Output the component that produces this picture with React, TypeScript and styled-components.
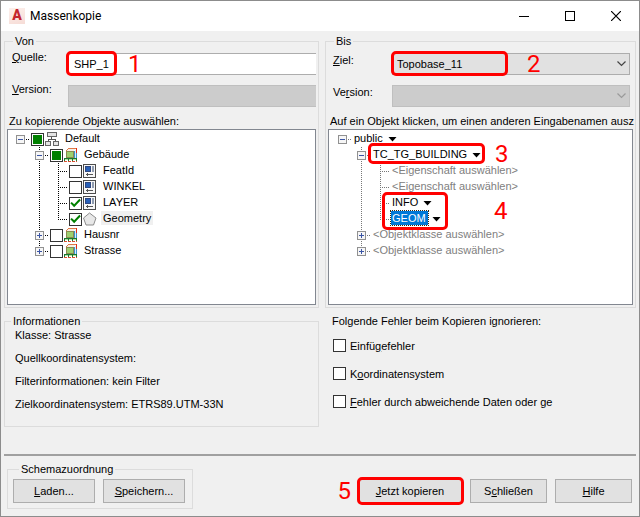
import React, { useEffect, useRef } from "react";
import styled, { createGlobalStyle, css } from "styled-components";

const GlobalStyle = createGlobalStyle`
  *, *::before, *::after { box-sizing: border-box; }
  body {
    margin: 0;
    font-family: "Liberation Sans", Arial, sans-serif;
    font-size: 11px;
    line-height: 14px;
    color: #000;
    background: #f0f0f0;
  }
  button, input, select { font: inherit; color: inherit; margin: 0; }
`;

/* ---------- window ---------- */

const Window = styled.div`
  display: flex;
  flex-direction: column;
  min-height: 100vh;
  background: #f0f0f0;
  border: 1px solid #8c8c8c;
`;

const TitleBar = styled.header`
  display: flex;
  align-items: center;
  height: 30px;
  padding-left: 8px;
  background: #fff;
`;

const AppLogo = styled.span`
  width: 16px;
  height: 16px;
  margin-right: 5px;
  background: linear-gradient(160deg, #fdf0ec, #f6dcd6);
  color: #c4262e;
  font: 900 14px/14px "Roboto", sans-serif;
  text-align: center;
`;

const Title = styled.h1`
  flex: 1;
  margin: 0;
  font: 12px/16px "Roboto", sans-serif;
`;

const WindowButton = styled.button`
  display: flex;
  align-items: center;
  justify-content: center;
  width: 46px;
  height: 30px;
  padding: 0;
  border: 0;
  background: transparent;
`;

const Content = styled.main`
  display: grid;
  grid-template-columns: minmax(0, 315fr) minmax(0, 311fr);
  column-gap: 6px;
  row-gap: 6px;
  padding: 3px 3px 0;
`;

/* ---------- groups and fields ---------- */

const Group = styled.fieldset`
  min-width: 0;
  margin: 0;
  padding: 0;
  border: 1px solid #dcdcdc;
`;

const Legend = styled.legend`
  margin-left: 6px;
  padding: 0 2px;
`;

const CopyGroup = styled(Group)<{ $top: number }>`
  padding: ${(p) => p.$top}px 2px 2px;
`;

const Fields = styled.div<{ $gap: number; $right: number }>`
  display: flex;
  flex-direction: column;
  gap: ${(p) => p.$gap}px;
  padding: 0 ${(p) => p.$right}px 0 5px;
`;

const Field = styled.div<{ $label: number; $drop: number }>`
  display: grid;
  grid-template-columns: ${(p) => p.$label}px minmax(0, 1fr);
  align-items: start;
  > div { margin-top: ${(p) => p.$drop}px; }
`;

const ControlWrap = styled.div`
  position: relative;
  display: flex;
`;

const control = css`
  width: 100%;
  height: 22px;
  border: 1px solid #adadad;
  border-radius: 0;
  &:disabled { background: #ccc; border-color: #bfbfbf; opacity: 1; }
`;

const TextBox = styled.input`
  ${control}
  padding: 0 5px;
  border-right-width: 0;
  background: #fff;
`;

const Combo = styled.select`
  ${control}
  appearance: none;
  padding: 0 20px 0 4px;
  background: #e1e1e1;
`;

const ComboArrow = styled.svg`
  position: absolute;
  right: 4px;
  top: 8px;
  pointer-events: none;
`;

const TreeCaption = styled.div`
  margin: 7px 0 1px;
  padding-left: 2px;
  white-space: nowrap;
`;

/* ---------- trees ---------- */

const TreeBox = styled.div<{ $left: number }>`
  min-height: 176px;
  padding: 1px 0 0 ${(p) => p.$left}px;
  border: 1px solid #828790;
  background: #fff;
`;

const TreeRow = styled.div`
  display: flex;
  height: 16px;
`;

const Guide = styled.svg`
  flex: none;
  display: block;
`;

const NodeLabel = styled.label`
  display: flex;
  align-items: center;
  height: 16px;
  padding-left: 1px;
`;

const NodeIcon = styled.svg`
  flex: none;
  margin: 0 4px 0 1px;
`;

const NodeText = styled.span<{ $active?: boolean }>`
  align-self: flex-start;
  padding: 0 2px;
  background: ${(p) => (p.$active ? "#f0f0f0" : "transparent")};
`;

const CheckBox = styled.input`
  appearance: none;
  flex: none;
  display: grid;
  place-items: center;
  width: 13px;
  height: 13px;
  border: 1px solid #333;
  background: #fff;
  &:checked::before {
    content: "";
    width: 11px;
    height: 11px;
    background: #008000;
    clip-path: polygon(3% 52%, 16% 40%, 38% 62%, 85% 12%, 98% 26%, 38% 88%);
  }
  &:indeterminate::before {
    content: "";
    width: 9px;
    height: 9px;
    background: #008000;
  }
`;

const TargetButton = styled.button<{ $empty?: boolean; $selected?: boolean }>`
  position: relative;
  display: flex;
  align-items: center;
  gap: 4px;
  height: 16px;
  padding: 0 0 0 1px;
  border: 0;
  background: transparent;
  color: ${(p) => (p.$empty ? "#808080" : p.$selected ? "#fff" : "#000")};
`;

const TargetText = styled.span<{ $selected?: boolean }>`
  align-self: flex-start;
  padding: 0 1px;
  white-space: nowrap;
  ${(p) =>
    p.$selected &&
    css`
      padding-right: 2px;
      background: #0078d7;
      outline: 1px dotted #3a2a10;
    `}
`;

/* ---------- annotations ---------- */

const Callout = styled.span<{ $top: number; $left: number; $width: number; $height: number }>`
  position: absolute;
  z-index: 1;
  top: ${(p) => p.$top}px;
  left: ${(p) => p.$left}px;
  width: ${(p) => p.$width}px;
  height: ${(p) => p.$height}px;
  border: 3px solid #f00;
  border-radius: 5px;
  pointer-events: none;
`;

const CalloutNumber = styled.span<{ $gap: number; $before?: boolean }>`
  position: absolute;
  top: 0;
  bottom: 0;
  ${(p) => (p.$before ? "right" : "left")}: calc(100% + ${(p) => p.$gap}px);
  display: flex;
  align-items: center;
  color: #f00;
  font: 24px/16px "Roboto", sans-serif;
`;

/* ---------- lower part ---------- */

const InfoList = styled.div`
  display: flex;
  flex-direction: column;
  gap: 9px;
  padding: 0 10px 15px;
`;

const IgnorePanel = styled.div`
  display: flex;
  flex-direction: column;
  align-items: flex-start;
  gap: 15px;
  padding-left: 7px;
`;

const IgnoreTitle = styled.div`
  margin-bottom: -4px;
`;

const IgnoreOption = styled.label`
  display: flex;
  align-items: center;
  gap: 4px;
  height: 13px;
  padding-left: 1px;
`;

const Separator = styled.hr`
  width: auto;
  height: 2px;
  margin: 27px 3px 6px;
  border: 0;
  background: #a0a0a0;
`;

const Footer = styled.footer`
  display: flex;
  justify-content: space-between;
  align-items: flex-end;
  padding: 0 7px 7px 6px;
`;

const SchemaGroup = styled(Group)`
  padding: 3px 7px 5px 5px;
`;

const ButtonRow = styled.div`
  display: flex;
  gap: 8px;
`;

const ActionRow = styled(ButtonRow)`
  padding-bottom: 6px;
`;

const PushButton = styled.button<{ $width: number }>`
  position: relative;
  width: ${(p) => p.$width}px;
  height: 24px;
  padding: 0;
  border: 1px solid #adadad;
  background: #e1e1e1;
  white-space: nowrap;
`;

/* ---------- drawings ---------- */

type GuideKind = "none" | "line" | "tee" | "corner" | "root" | "open" | "closed" | "closedLast";

function GuideCell({ kind, tone }: { kind: GuideKind; tone: string }) {
  const expander = kind === "root" || kind === "open" || kind === "closed" || kind === "closedLast";
  const up = kind !== "none" && kind !== "root";
  const down = up && kind !== "corner" && kind !== "closedLast";
  const right = kind !== "none" && kind !== "line";
  return (
    <Guide width="19" height="16" viewBox="0 0 19 16" shapeRendering="crispEdges" aria-hidden="true">
      <g stroke={tone} strokeDasharray="1 1">
        {up && <path d="M9.5 0V9" />}
        {down && <path d="M9.5 8V16" />}
        {right && <path d="M9 8.5H19" />}
      </g>
      {expander && (
        <>
          <rect x="5.5" y="4.5" width="8" height="8" fill="#f6f6f6" stroke="#919191" />
          <path d="M7 8.5H12" stroke="#3b55a5" />
          {kind.startsWith("closed") && <path d="M9.5 6V11" stroke="#3b55a5" />}
        </>
      )}
    </Guide>
  );
}

type IconName = "schema" | "feature" | "attribute" | "polygon";

function TreeIcon({ name }: { name: IconName }) {
  return (
    <NodeIcon width="14" height="14" viewBox="0 0 14 14" aria-hidden="true">
      {name === "schema" && (
        <g shapeRendering="crispEdges">
          <path d="M6.5 5V8M3.5 10V7.5H10.5V10" fill="none" stroke="#555" />
          <rect x="2.5" y="0.5" width="9" height="4" fill="#e4e4e4" stroke="#666" />
          <rect x="0.5" y="9.5" width="5" height="4" fill="#e4e4e4" stroke="#666" />
          <rect x="8.5" y="9.5" width="5" height="4" fill="#e4e4e4" stroke="#666" />
        </g>
      )}
      {name === "feature" && (
        <g shapeRendering="crispEdges">
          <path d="M4 1H11V2H10V10H2V3H3V2H4Z" fill="#f6efe4" />
          <path d="M10 3H11V2H12V10H10Z" fill="#d8ecfa" />
          <path d="M4 0.500H12M2.500 3V2M3.500 2V1" stroke="#e07848" />
          <path d="M12.500 0V5" stroke="#e03018" />
          <path d="M12.500 5V11M10.500 3V10" stroke="#3c94d0" />
          <rect x="2.500" y="3.500" width="7" height="6" fill="#9cd070" stroke="#8a8a50" />
          <path d="M0 10.500H13M0.500 11V13M4.500 11V13M8.500 11V13M12.500 11V13" stroke="#187830" />
          <path d="M1 11.500H4M5 11.500H8M9 11.500H12" stroke="#b8e0a0" />
          <path d="M0 13.500H13" stroke="#d85030" strokeDasharray="3 1" />
        </g>
      )}
      {name === "attribute" && (
        <g shapeRendering="crispEdges">
          <rect x="0.500" y="0.500" width="12" height="13" fill="#f8f8f8" stroke="#4c4c4c" />
          <rect x="2.500" y="2.500" width="5" height="5" fill="#2860b8" stroke="#304880" />
          <path d="M9 2H11V8H9Z" fill="#909cb0" />
          <path d="M3 10.500H10M4.500 9V12" stroke="#555" />
        </g>
      )}
      {name === "polygon" && (
        <path d="M6.500 1L13 6L10.500 13H3L0.500 6Z" fill="#e8e8e8" stroke="#8c8c8c" />
      )}
    </NodeIcon>
  );
}

function DropArrow() {
  return (
    <svg width="9" height="5" viewBox="0 0 9 5" aria-hidden="true">
      <path d="M0.500 0H8.500L4.500 4.500Z" fill="#000" />
    </svg>
  );
}

/* ---------- data ---------- */

type SourceNode = {
  text: string;
  guides: GuideKind[];
  icon: IconName;
  state: "off" | "on" | "mixed";
  active?: boolean;
};

const sourceNodes: SourceNode[] = [
  { text: "Default", guides: ["root"], icon: "schema", state: "mixed" },
  { text: "Gebäude", guides: ["none", "open"], icon: "feature", state: "mixed" },
  { text: "FeatId", guides: ["none", "line", "tee"], icon: "attribute", state: "off" },
  { text: "WINKEL", guides: ["none", "line", "tee"], icon: "attribute", state: "off" },
  { text: "LAYER", guides: ["none", "line", "tee"], icon: "attribute", state: "on" },
  { text: "Geometry", guides: ["none", "line", "corner"], icon: "polygon", state: "on", active: true },
  { text: "Hausnr", guides: ["none", "closed"], icon: "feature", state: "off" },
  { text: "Strasse", guides: ["none", "closedLast"], icon: "feature", state: "off" },
];

type Mark = { n: number; top: number; left: number; width: number; height: number; gap: number };

type TargetNode = {
  text: string;
  guides: GuideKind[];
  empty?: boolean;
  selected?: boolean;
  mark?: Mark;
};

const targetNodes: TargetNode[] = [
  { text: "public", guides: ["root"] },
  {
    text: "TC_TG_BUILDING",
    guides: ["none", "open"],
    mark: { n: 3, top: -4, left: -3, width: 117, height: 21, gap: 13 },
  },
  { text: "<Eigenschaft auswählen>", guides: ["none", "line", "tee"], empty: true },
  { text: "<Eigenschaft auswählen>", guides: ["none", "line", "tee"], empty: true },
  {
    text: "INFO",
    guides: ["none", "line", "tee"],
    mark: { n: 4, top: -3, left: -8, width: 66, height: 38, gap: 49 },
  },
  { text: "GEOM", guides: ["none", "line", "corner"], selected: true },
  { text: "<Objektklasse auswählen>", guides: ["none", "closed"], empty: true },
  { text: "<Objektklasse auswählen>", guides: ["none", "closedLast"], empty: true },
];

const infoLines = [
  "Klasse: Strasse",
  "Quellkoordinatensystem:",
  "Filterinformationen: kein Filter",
  "Zielkoordinatensystem: ETRS89.UTM-33N",
];

/* ---------- parts ---------- */

function NodeCheck({ state }: { state: SourceNode["state"] }) {
  const ref = useRef<HTMLInputElement>(null);
  useEffect(() => {
    if (ref.current) ref.current.indeterminate = state === "mixed";
  }, [state]);
  return <CheckBox ref={ref} type="checkbox" defaultChecked={state === "on"} />;
}

function Marker({ n, top, left, width, height, gap, before }: Mark & { before?: boolean }) {
  return (
    <Callout $top={top} $left={left} $width={width} $height={height}>
      <CalloutNumber $gap={gap} $before={before}>{n}</CalloutNumber>
    </Callout>
  );
}

function Chevron({ color }: { color: string }) {
  return (
    <ComboArrow width="9" height="6" viewBox="0 0 9 6" aria-hidden="true">
      <path d="M0.500 0.500L4.500 4.500L8.500 0.500" fill="none" stroke={color} strokeWidth="1.2" />
    </ComboArrow>
  );
}

export default function App() {
  return (
    <Window>
      <GlobalStyle />
      <TitleBar>
        <AppLogo aria-hidden="true">A</AppLogo>
        <Title>Massenkopie</Title>
        <WindowButton aria-label="Minimieren">
          <svg width="10" height="10" shapeRendering="crispEdges"><path d="M0 5.500H10" stroke="#000" /></svg>
        </WindowButton>
        <WindowButton aria-label="Maximieren">
          <svg width="10" height="10" shapeRendering="crispEdges"><rect x="0.500" y="0.500" width="9" height="9" fill="none" stroke="#000" /></svg>
        </WindowButton>
        <WindowButton aria-label="Fenster schließen">
          <svg width="10" height="10"><path d="M0 0L10 10M10 0L0 10" stroke="#000" strokeWidth="1.2" /></svg>
        </WindowButton>
      </TitleBar>

      <Content>
        <CopyGroup $top={2}>
          <Legend>Von</Legend>
          <Fields $gap={7} $right={0}>
            <Field $label={56} $drop={3}>
              <label htmlFor="quelle"><u>Q</u>uelle:</label>
              <ControlWrap>
                <TextBox id="quelle" defaultValue="SHP_1" />
                <Marker n={1} top={-2} left={-2} width={51} height={25} gap={14} />
              </ControlWrap>
            </Field>
            <Field $label={56} $drop={3}>
              <label htmlFor="quellversion"><u>V</u>ersion:</label>
              <ControlWrap><TextBox id="quellversion" disabled /></ControlWrap>
            </Field>
          </Fields>
          <TreeCaption>Zu kopierende Objekte auswählen:</TreeCaption>
          <TreeBox $left={3}>
            {sourceNodes.map((node) => (
              <TreeRow key={node.text}>
                {node.guides.map((kind, i) => <GuideCell key={i} kind={kind} tone="#000" />)}
                <NodeLabel>
                  <NodeCheck state={node.state} />
                  <TreeIcon name={node.icon} />
                  <NodeText $active={node.active}>{node.text}</NodeText>
                </NodeLabel>
              </TreeRow>
            ))}
          </TreeBox>
        </CopyGroup>

        <CopyGroup $top={5}>
          <Legend>Bis</Legend>
          <Fields $gap={10} $right={3}>
            <Field $label={59} $drop={0}>
              <label htmlFor="ziel"><u>Z</u>iel:</label>
              <ControlWrap>
                <Combo id="ziel"><option>Topobase_11</option></Combo>
                <Chevron color="#444" />
                <Marker n={2} top={-2} left={-1} width={117} height={25} gap={22} />
              </ControlWrap>
            </Field>
            <Field $label={59} $drop={0}>
              <label htmlFor="zielversion">Ve<u>r</u>sion:</label>
              <ControlWrap>
                <Combo id="zielversion" disabled />
                <Chevron color="#9a9a9a" />
              </ControlWrap>
            </Field>
          </Fields>
          <TreeCaption>Auf ein Objekt klicken, um einen anderen Eingabenamen ausz</TreeCaption>
          <TreeBox $left={4}>
            {targetNodes.map((node, row) => (
              <TreeRow key={row}>
                {node.guides.map((kind, i) => <GuideCell key={i} kind={kind} tone="#777" />)}
                <TargetButton $empty={node.empty} $selected={node.selected}>
                  <TargetText $selected={node.selected}>{node.text}</TargetText>
                  {!node.empty && <DropArrow />}
                  {node.mark && <Marker {...node.mark} />}
                </TargetButton>
              </TreeRow>
            ))}
          </TreeBox>
        </CopyGroup>

        <Group>
          <Legend>Informationen</Legend>
          <InfoList>
            {infoLines.map((line) => <div key={line}>{line}</div>)}
          </InfoList>
        </Group>

        <IgnorePanel>
          <IgnoreTitle>Folgende Fehler beim Kopieren ignorieren:</IgnoreTitle>
          <IgnoreOption><CheckBox type="checkbox" /><span>Einfü<u>g</u>efehler</span></IgnoreOption>
          <IgnoreOption><CheckBox type="checkbox" /><span>K<u>o</u>ordinatensystem</span></IgnoreOption>
          <IgnoreOption><CheckBox type="checkbox" /><span><u>F</u>ehler durch abweichende Daten oder ge</span></IgnoreOption>
        </IgnorePanel>
      </Content>

      <Separator />

      <Footer>
        <SchemaGroup>
          <Legend>Schemazuordnung</Legend>
          <ButtonRow>
            <PushButton $width={82}><u>L</u>aden...</PushButton>
            <PushButton $width={82}><u>S</u>peichern...</PushButton>
          </ButtonRow>
        </SchemaGroup>
        <ActionRow>
          <PushButton $width={104}>
            <u>J</u>etzt kopieren
            <Marker n={5} top={-3} left={-2} width={107} height={28} gap={9} before />
          </PushButton>
          <PushButton $width={77}>S<u>c</u>hließen</PushButton>
          <PushButton $width={77}><u>H</u>ilfe</PushButton>
        </ActionRow>
      </Footer>
    </Window>
  );
}
